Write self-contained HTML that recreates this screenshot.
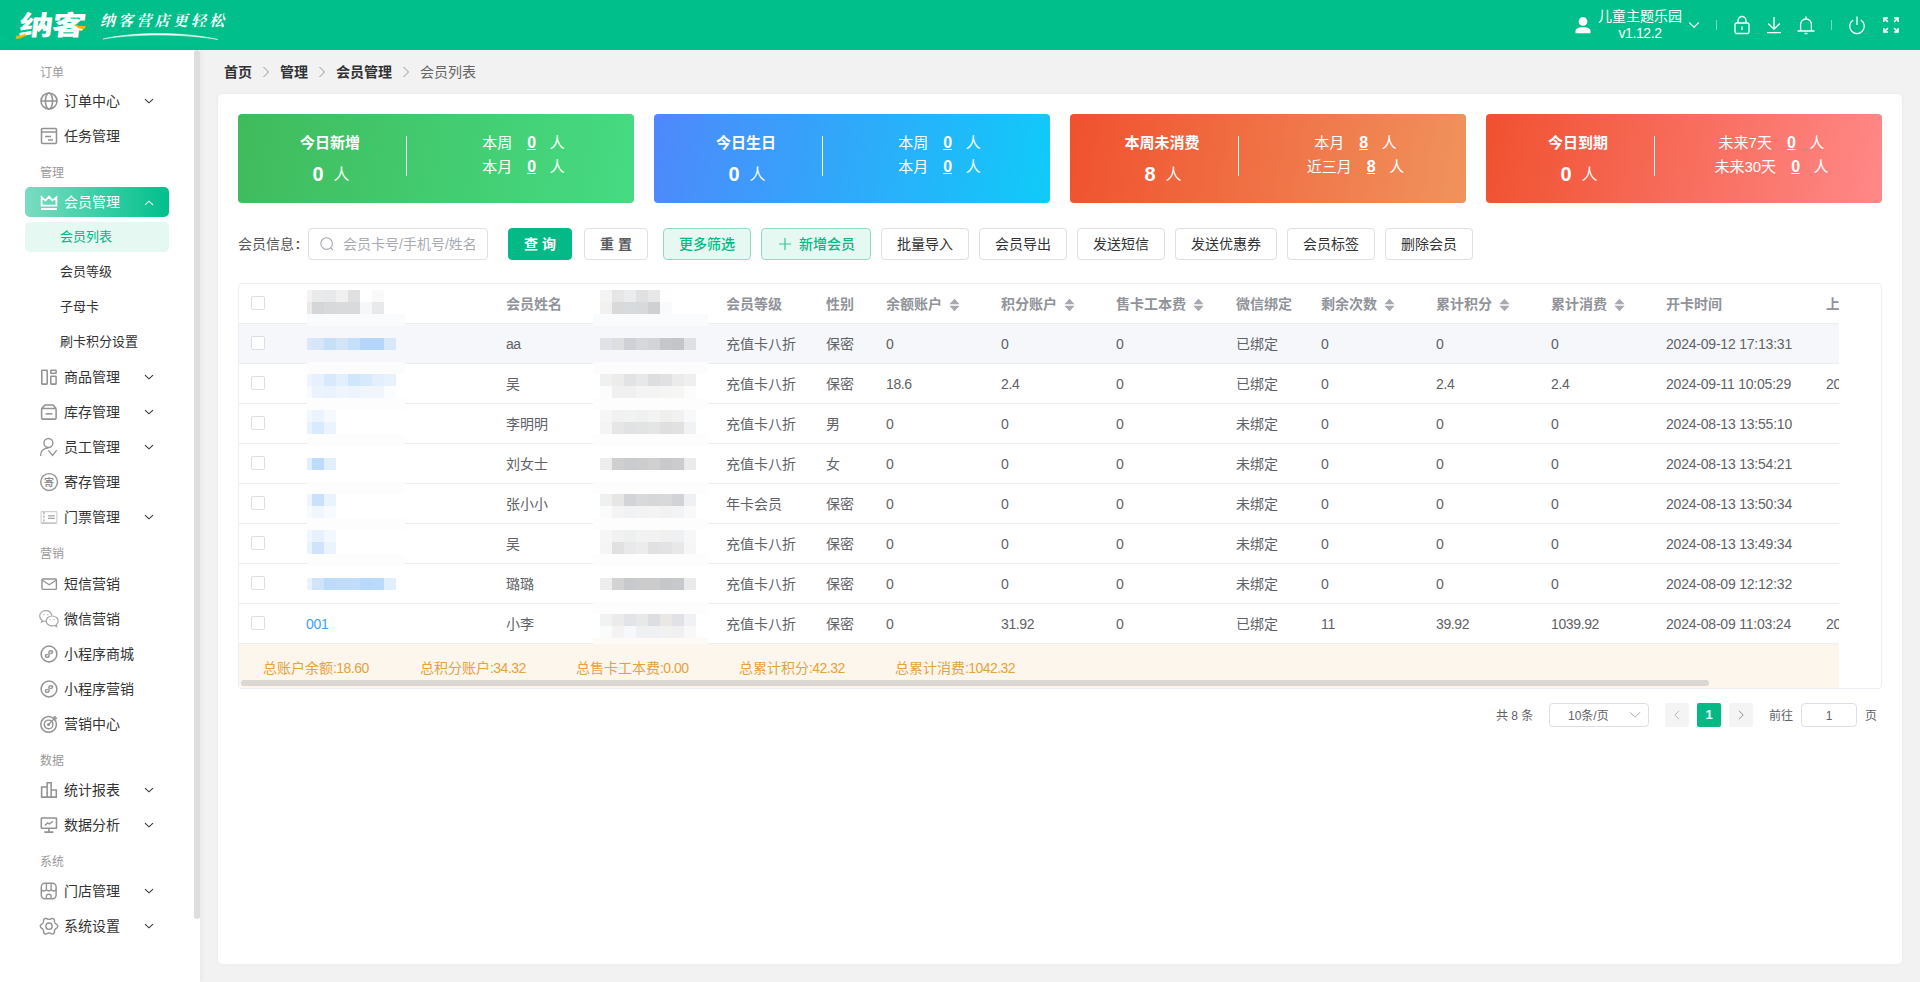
<!DOCTYPE html>
<html lang="zh-CN">
<head>
<meta charset="utf-8">
<title>会员列表</title>
<style>
*{box-sizing:border-box;margin:0;padding:0}
html,body{width:1920px;height:982px;overflow:hidden;background:#f2f2f2}
body{font-family:"Liberation Sans","Noto Sans CJK SC",sans-serif;font-size:14px;color:#333;position:relative}
.t{position:absolute;white-space:nowrap}
#hdr{position:absolute;left:0;top:0;width:1920px;height:50px;background:#00bf8a}
#side{position:absolute;left:0;top:50px;width:200px;height:932px;background:#fff;box-shadow:1px 0 5px rgba(0,0,0,.05)}
#thumb{position:absolute;left:194px;top:0;width:6px;height:869px;background:#dddee0;border-radius:3px}
.grp{position:absolute;left:40px;font-size:12px;color:#999;line-height:14px;white-space:nowrap}
.mi{position:absolute;left:64px;font-size:14px;color:#333;line-height:16px;white-space:nowrap}
.sub{position:absolute;left:60px;font-size:13px;color:#333;line-height:15px;white-space:nowrap}
.ico{position:absolute;left:39px;width:20px;height:20px;overflow:visible}
.arr{position:absolute;left:144px;width:10px;height:6px;overflow:visible}
#card{position:absolute;left:218px;top:94px;width:1684px;height:870px;background:#fff;border-radius:5px;box-shadow:0 0 4px rgba(0,0,0,.04)}
.stat{position:absolute;top:114px;width:396px;height:89px;border-radius:4px;color:#fff}
.stat .ttl{position:absolute;left:0;width:184px;text-align:center;top:19px;font-size:15px;font-weight:bold;line-height:20px}
.stat .big{position:absolute;left:0;width:184px;text-align:center;top:46px;font-size:16px;line-height:26px;white-space:nowrap;padding-left:2px}
.stat .big b{font-size:20px;margin-right:10px;position:relative;top:1px}
.stat .ln{position:absolute;left:168px;top:22px;width:1px;height:40px;background:rgba(255,255,255,.9)}
.stat .r{position:absolute;left:175px;width:221px;text-align:center;font-size:15px;line-height:20px;white-space:nowrap}
.stat .r u{font-weight:bold;font-size:16px;margin:0 14px 0 15px;letter-spacing:-.5px}
.btn{position:absolute;top:228px;height:32px;border:1px solid #dcdfe6;border-radius:4px;background:#fff;color:#333;font-size:14px;line-height:30px;text-align:center;white-space:nowrap}
.th{position:absolute;top:296px;font-size:14px;font-weight:bold;color:#909399;line-height:16px;white-space:nowrap}
.td{position:absolute;font-size:14px;color:#606266;line-height:16px;white-space:nowrap}
.row{position:absolute;left:239px;width:1600px;height:40px;border-bottom:1px solid #ebeef5}
.cb{position:absolute;left:251px;width:14px;height:14px;border:1px solid #dcdfe6;border-radius:2px;background:#fff}
.sort{position:absolute;top:298px;width:11px;height:14px}
.mz{position:absolute;height:12px}
.num{letter-spacing:-.24px}
.dec{letter-spacing:-.37px}
.dt{letter-spacing:-.21px}
.ft{letter-spacing:-.55px}
</style>
</head>
<body>
<div id="hdr"><div class="t" id="logo" style="left:17px;top:6px;font-size:27px;line-height:40px;font-weight:900;color:#fff;letter-spacing:-1px;transform-origin:0 100%;transform:skewX(-7deg) scaleX(1.26)">纳客</div><svg class="t" style="left:0;top:0" width="100" height="50" viewBox="0 0 100 50"><path d="M15.5 38.8 L16.5 35.6 C20 35.8 23 35 26 33.2 L25 36 C22 38 19 39 15.5 38.8Z" fill="#f7b500"/><path d="M73.5 24.2 C77 25 81 27.2 85.5 25.4 L84.5 28.4 C80 30 77 27.6 73.5 24.2Z" fill="#f7b500"/></svg><div class="t" id="slogan" style="left:100px;top:10px;font-size:15px;line-height:22px;font-style:italic;color:#fff;letter-spacing:3.2px;font-family:'Liberation Serif','Noto Serif CJK SC',serif;font-weight:700">纳客营店更轻松</div><svg class="t" style="left:100px;top:30px" width="125" height="12" viewBox="0 0 125 12"><path d="M3 9 C30 2.5 80 1 118 9.5 C80 3 30 4.5 3 9Z" fill="#fff" stroke="#fff" stroke-width=".5" opacity=".95"/></svg><svg class="t" style="left:1575px;top:17px" width="16" height="17" viewBox="0 0 16 17"><circle cx="8" cy="4.5" r="4.4" fill="#fff"/><path d="M0.5 16.3 V14 C0.5 11.4 3.4 10.2 8 10.2 S15.5 11.4 15.5 14 V16.3Z" fill="#fff"/></svg><div class="t" style="left:1598px;top:8px;width:84px;text-align:center;font-size:14px;line-height:17px;color:#fff">儿童主题乐园<br><span style="letter-spacing:-.4px">v1.12.2</span></div><svg class="t" style="left:1688px;top:21px" width="12" height="8" viewBox="0 0 12 8"><path d="M1.2 1.5 L6 6.2 L10.8 1.5" fill="none" stroke="#fff" stroke-width="1.2"/></svg><div class="t" style="left:1716px;top:20px;width:1px;height:10px;background:rgba(255,255,255,.45)"></div><svg class="t" style="left:1733px;top:15px" width="18" height="20" viewBox="0 0 18 20"><rect x="2" y="8" width="14" height="10.5" rx="1.5" fill="none" stroke="#fff" stroke-width="1.3"/><path d="M5 8 V5.5 A4 4 0 0 1 13 5.5 V8" fill="none" stroke="#fff" stroke-width="1.3"/><path d="M9 11.5 V15" stroke="#fff" stroke-width="1.3"/></svg><svg class="t" style="left:1765px;top:15px" width="18" height="20" viewBox="0 0 18 20"><path d="M9 2 V14 M3.2 8.5 L9 14.2 L14.8 8.5 M2 17.7 H16" fill="none" stroke="#fff" stroke-width="1.3"/></svg><svg class="t" style="left:1797px;top:15px" width="18" height="20" viewBox="0 0 18 20"><path d="M3.6 16 V9.4 A5.4 5.4 0 0 1 14.4 9.4 V16 M1 16 H17 M9 1.8 V4 M8 18.5 H10" fill="none" stroke="#fff" stroke-width="1.3" stroke-linecap="round"/></svg><div class="t" style="left:1831px;top:20px;width:1px;height:10px;background:rgba(255,255,255,.45)"></div><svg class="t" style="left:1848px;top:15px" width="18" height="20" viewBox="0 0 18 20"><path d="M5.2 5 A7.3 7.3 0 1 0 12.8 5 M9 1.5 V10" fill="none" stroke="#fff" stroke-width="1.3"/></svg><svg class="t" style="left:1882px;top:16px" width="18" height="18" viewBox="0 0 18 18"><g fill="none" stroke="#fff" stroke-width="1.5"><path d="M1.9 5.9 V1.9 H5.9 M1.9 1.9 L5.9 5.9"/><path d="M12.1 1.9 H16.1 V5.9 M16.1 1.9 L12.1 5.9"/><path d="M1.9 12.1 V16.1 H5.9 M1.9 16.1 L5.9 12.1"/><path d="M12.1 16.1 H16.1 V12.1 M16.1 16.1 L12.1 12.1"/></g></svg></div>
<div id="side"><div id="thumb"></div></div>
<div class="grp" style="top:66px">订单</div><svg class="ico" style="top:91px" viewBox="0 0 20 20" fill="none" stroke="#939393" stroke-width="1.55"><circle cx="10" cy="10" r="8"/><ellipse cx="10" cy="10" rx="3.6" ry="8"/><path d="M2 10 H18"/></svg><div class="mi" style="top:93px;color:#333">订单中心</div><svg class="arr" style="top:98px" viewBox="0 0 10 6"><path d="M1 1.2 L5 4.8 L9 1.2" fill="none" stroke="#333" stroke-width="1.1"/></svg><svg class="ico" style="top:126px" viewBox="0 0 20 20" fill="none" stroke="#939393" stroke-width="1.55"><rect x="2.5" y="2.5" width="15" height="15" rx="1.2"/><path d="M2.5 6 H17.5 M6 10.5 H12 M9 14 H14"/></svg><div class="mi" style="top:128px;color:#333">任务管理</div><div class="grp" style="top:166px">管理</div><div class="t" style="left:25px;top:187px;width:144px;height:30px;border-radius:5px;background:linear-gradient(90deg,#7bdcc2,#00c08b)"></div><svg class="ico" style="top:192px" viewBox="0 0 20 20" fill="none" stroke="#fff" stroke-width="1.8"><path d="M2.6 13.6 V5.2 L6.6 8.6 L10 4.6 L13.4 8.6 L17.4 5.2 V13.6 Z M2 17 H18"/></svg><div class="mi" style="top:194px;color:#fff">会员管理</div><svg class="arr" style="top:200px" viewBox="0 0 10 6"><path d="M1 4.8 L5 1.2 L9 4.8" fill="none" stroke="#fff" stroke-width="1.05"/></svg><div class="t" style="left:25px;top:222px;width:144px;height:30px;border-radius:5px;background:#e5f8f2"></div><div class="sub" style="top:229px;color:#00b883">会员列表</div><div class="sub" style="top:264px;color:#333">会员等级</div><div class="sub" style="top:299px;color:#333">子母卡</div><div class="sub" style="top:334px;color:#333">刷卡积分设置</div><svg class="ico" style="top:367px" viewBox="0 0 20 20" fill="none" stroke="#939393" stroke-width="1.55"><rect x="2.8" y="3.3" width="5.4" height="13.8" rx=".5"/><rect x="11.8" y="3.3" width="5.3" height="2.9" rx=".4"/><rect x="11.8" y="9.2" width="5.3" height="7.9" rx=".5"/></svg><div class="mi" style="top:369px;color:#333">商品管理</div><svg class="arr" style="top:374px" viewBox="0 0 10 6"><path d="M1 1.2 L5 4.8 L9 1.2" fill="none" stroke="#333" stroke-width="1.1"/></svg><svg class="ico" style="top:402px" viewBox="0 0 20 20" fill="none" stroke="#939393" stroke-width="1.55"><path d="M2.6 6.6 L6 3 H14 L17.1 6.6"/><rect x="2.6" y="6.5" width="14.5" height="10.6" rx="1"/><path d="M6.6 11.9 H13.4"/></svg><div class="mi" style="top:404px;color:#333">库存管理</div><svg class="arr" style="top:409px" viewBox="0 0 10 6"><path d="M1 1.2 L5 4.8 L9 1.2" fill="none" stroke="#333" stroke-width="1.1"/></svg><svg class="ico" style="top:437px" viewBox="0 0 20 20" fill="none" stroke="#939393" stroke-width="1.55"><circle cx="9.4" cy="6" r="4.5" stroke-width="1.35"/><path d="M1.5 19 C1.6 14.4 4.6 11.2 9.4 10.9 M9.4 13.3 L13.6 18.5 L17.7 13.1" stroke-width="1.35"/></svg><div class="mi" style="top:439px;color:#333">员工管理</div><svg class="arr" style="top:444px" viewBox="0 0 10 6"><path d="M1 1.2 L5 4.8 L9 1.2" fill="none" stroke="#333" stroke-width="1.1"/></svg><svg class="ico" style="top:472px" viewBox="0 0 20 20" fill="none" stroke="#939393" stroke-width="1.55"><circle cx="10.1" cy="10.05" r="8.4" stroke-width="1.4"/><text x="10.1" y="13.7" font-size="10" font-weight="bold" text-anchor="middle" fill="#8e8e8e" stroke="none" font-family="'Liberation Sans','Noto Sans CJK SC',sans-serif">寄</text></svg><div class="mi" style="top:474px;color:#333">寄存管理</div><svg class="ico" style="top:507px" viewBox="0 0 20 20" fill="none" stroke="#cfcfcf" stroke-width="1.1"><rect x="2.1" y="4.6" width="15.8" height="11.5" rx=".8"/><path d="M2.6 16.1 H17.4" stroke="#bdbdbd" stroke-width="1.2"/><path d="M4.9 5 V16" stroke="#9a9a9a" stroke-dasharray="2.2 1.4"/><path d="M9 8.8 H15.8 M9 11.4 H15.8" stroke="#a6a6a6" stroke-width="1.2"/></svg><div class="mi" style="top:509px;color:#333">门票管理</div><svg class="arr" style="top:514px" viewBox="0 0 10 6"><path d="M1 1.2 L5 4.8 L9 1.2" fill="none" stroke="#333" stroke-width="1.1"/></svg><div class="grp" style="top:547px">营销</div><svg class="ico" style="top:574px" viewBox="0 0 20 20" fill="none" stroke="#939393" stroke-width="1.55"><rect x="3" y="5" width="14.4" height="10.4" rx="1" stroke-width="1.4"/><path d="M3.4 6.2 L10.2 10.8 L17 6.2" stroke-width="1.3"/></svg><div class="mi" style="top:576px;color:#333">短信营销</div><svg class="ico" style="top:609px" viewBox="0 0 20 20" fill="none" stroke="#a4a4a4" stroke-width="1.15"><path d="M12.8 6.6 C12.2 3.6 9.8 1.6 6.8 1.6 C3.4 1.6 .7 4 .7 7 C.7 8.8 1.6 10.2 3 11.2 L2.4 13.2 L4.8 12 C5.6 12.3 6.3 12.4 7 12.4"/><path d="M13.2 7 C16.4 7 19.2 9.2 19.2 12 C19.2 13.5 18.4 14.8 17.2 15.7 L17.7 17.6 L15.6 16.5 C14.8 16.8 14 16.9 13.2 16.9 C9.9 16.9 7.2 14.8 7.2 12 C7.2 9.2 9.9 7 13.2 7Z"/><circle cx="4.8" cy="5.6" r=".7" fill="#aaa" stroke="none"/><circle cx="8.8" cy="5.6" r=".7" fill="#aaa" stroke="none"/><circle cx="11.2" cy="10.6" r=".6" fill="#aaa" stroke="none"/><circle cx="15.2" cy="10.6" r=".6" fill="#aaa" stroke="none"/></svg><div class="mi" style="top:611px;color:#333">微信营销</div><svg class="ico" style="top:644px" viewBox="0 0 20 20" fill="none" stroke="#939393" stroke-width="1.55"><circle cx="10" cy="10" r="7.9" stroke-width="1.5"/><path d="M7.8 10.6 C6.5 10.6 5.6 11.3 5.6 12.3 C5.6 13.3 6.5 14 7.7 14 C9 14 10 13.2 10 12 V8 C10 6.8 11 6 12.3 6 C13.5 6 14.4 6.7 14.4 7.7 C14.4 8.7 13.5 9.4 12.2 9.4" stroke-width="1.75" stroke-linecap="round" transform="translate(10 10) scale(.82) translate(-10 -10)"/></svg><div class="mi" style="top:646px;color:#333">小程序商城</div><svg class="ico" style="top:679px" viewBox="0 0 20 20" fill="none" stroke="#939393" stroke-width="1.55"><circle cx="10" cy="10" r="7.9" stroke-width="1.5"/><path d="M7.8 10.6 C6.5 10.6 5.6 11.3 5.6 12.3 C5.6 13.3 6.5 14 7.7 14 C9 14 10 13.2 10 12 V8 C10 6.8 11 6 12.3 6 C13.5 6 14.4 6.7 14.4 7.7 C14.4 8.7 13.5 9.4 12.2 9.4" stroke-width="1.75" stroke-linecap="round" transform="translate(10 10) scale(.82) translate(-10 -10)"/></svg><div class="mi" style="top:681px;color:#333">小程序营销</div><svg class="ico" style="top:714px" viewBox="0 0 20 20" fill="none" stroke="#939393" stroke-width="1.55"><circle cx="9.6" cy="10.4" r="7.8" stroke-width="1.5"/><circle cx="9.6" cy="10.4" r="4.3" stroke-width="1.4"/><circle cx="9.6" cy="10.4" r="1.5" fill="#939393" stroke="none"/><path d="M9.6 10.4 L16.2 3.8" stroke-width="1.3"/><path d="M14.4 2.8 L14.9 5.1 L17.2 5.6 L18.6 3.4 L16.6 3.4 L16.6 1.4Z" fill="#939393" stroke="none"/></svg><div class="mi" style="top:716px;color:#333">营销中心</div><div class="grp" style="top:754px">数据</div><svg class="ico" style="top:780px" viewBox="0 0 20 20" fill="none" stroke="#939393" stroke-width="1.55"><path d="M2.6 17.1 V7 H8.15 M8.15 17.1 V2.8 H12.15 V17.1 M12.15 10 H17.3 V17.1 M1.9 17.1 H18"/></svg><div class="mi" style="top:782px;color:#333">统计报表</div><svg class="arr" style="top:787px" viewBox="0 0 10 6"><path d="M1 1.2 L5 4.8 L9 1.2" fill="none" stroke="#333" stroke-width="1.1"/></svg><svg class="ico" style="top:815px" viewBox="0 0 20 20" fill="none" stroke="#939393" stroke-width="1.55"><rect x="2.3" y="3" width="15.2" height="10.3" rx=".6"/><path d="M9.9 13.3 V17 M5.4 17.1 H14.4"/><path d="M5.8 10.5 L8.7 7.9 L10.3 9 L13.9 6.4" stroke-width="1.3"/></svg><div class="mi" style="top:817px;color:#333">数据分析</div><svg class="arr" style="top:822px" viewBox="0 0 10 6"><path d="M1 1.2 L5 4.8 L9 1.2" fill="none" stroke="#333" stroke-width="1.1"/></svg><div class="grp" style="top:855px">系统</div><svg class="ico" style="top:881px" viewBox="0 0 20 20" fill="none" stroke="#939393" stroke-width="1.55"><rect x="2.3" y="2.3" width="14.8" height="15.4" rx="3.6" stroke-width="1.45"/><path d="M7.4 2.3 V8.4 M12.1 2.3 V8.4 M2.3 8 C2.6 10.6 7 10.6 7.4 8.2 C7.8 10.6 11.7 10.6 12.1 8.2 C12.5 10.6 16.8 10.6 17.1 8 M7.4 17.7 V15.3 C7.4 12.6 12.1 12.6 12.1 15.3 V17.7" stroke-width="1.35"/></svg><div class="mi" style="top:883px;color:#333">门店管理</div><svg class="arr" style="top:888px" viewBox="0 0 10 6"><path d="M1 1.2 L5 4.8 L9 1.2" fill="none" stroke="#333" stroke-width="1.1"/></svg><svg class="ico" style="top:916px" viewBox="0 0 20 20" fill="none" stroke="#939393" stroke-width="1.55"><path d="M18.70 10.20 L18.61 10.76 L18.35 11.30 L17.96 11.78 L17.49 12.21 L16.88 12.54 L16.47 12.88 L16.14 13.23 L15.89 13.60 L15.70 14.01 L15.56 14.46 L15.46 14.99 L15.48 15.68 L15.35 16.30 L15.13 16.88 L14.79 17.37 L14.35 17.73 L13.82 17.94 L13.22 17.98 L12.61 17.88 L12.01 17.69 L11.42 17.33 L10.91 17.14 L10.45 17.04 L10.00 17.00 L9.55 17.04 L9.09 17.14 L8.58 17.33 L7.99 17.69 L7.39 17.88 L6.78 17.98 L6.18 17.94 L5.65 17.73 L5.21 17.37 L4.87 16.88 L4.65 16.30 L4.52 15.68 L4.54 14.99 L4.44 14.46 L4.30 14.01 L4.11 13.60 L3.86 13.23 L3.53 12.88 L3.12 12.54 L2.51 12.21 L2.04 11.78 L1.65 11.30 L1.39 10.76 L1.30 10.20 L1.39 9.64 L1.65 9.10 L2.04 8.62 L2.51 8.19 L3.12 7.86 L3.53 7.52 L3.86 7.17 L4.11 6.80 L4.30 6.39 L4.44 5.94 L4.54 5.41 L4.52 4.72 L4.65 4.10 L4.87 3.52 L5.21 3.03 L5.65 2.67 L6.18 2.46 L6.78 2.42 L7.39 2.52 L7.99 2.71 L8.58 3.07 L9.09 3.26 L9.55 3.36 L10.00 3.40 L10.45 3.36 L10.91 3.26 L11.42 3.07 L12.01 2.71 L12.61 2.52 L13.22 2.42 L13.82 2.46 L14.35 2.67 L14.79 3.03 L15.13 3.52 L15.35 4.10 L15.48 4.72 L15.46 5.41 L15.56 5.94 L15.70 6.39 L15.89 6.80 L16.14 7.17 L16.47 7.52 L16.88 7.86 L17.49 8.19 L17.96 8.62 L18.35 9.10 L18.61 9.64Z" stroke-linejoin="round" stroke-width="1.4"/><circle cx="10" cy="10.2" r="3.15" stroke-width="1.4"/></svg><div class="mi" style="top:918px;color:#333">系统设置</div><svg class="arr" style="top:923px" viewBox="0 0 10 6"><path d="M1 1.2 L5 4.8 L9 1.2" fill="none" stroke="#333" stroke-width="1.1"/></svg>
<div class="t" style="left:224px;top:63px;font-size:14px;line-height:18px;font-weight:bold;color:#303133">首页</div><div class="t" style="left:280px;top:63px;font-size:14px;line-height:18px;font-weight:bold;color:#303133">管理</div><div class="t" style="left:336px;top:63px;font-size:14px;line-height:18px;font-weight:bold;color:#303133">会员管理</div><div class="t" style="left:420px;top:63px;font-size:14px;line-height:18px;color:#666">会员列表</div><svg class="t" style="left:262px;top:66px" width="8" height="12" viewBox="0 0 8 12"><path d="M1.5 1 L6.5 6 L1.5 11" fill="none" stroke="#909399" stroke-width="1"/></svg><svg class="t" style="left:318px;top:66px" width="8" height="12" viewBox="0 0 8 12"><path d="M1.5 1 L6.5 6 L1.5 11" fill="none" stroke="#909399" stroke-width="1"/></svg><svg class="t" style="left:402px;top:66px" width="8" height="12" viewBox="0 0 8 12"><path d="M1.5 1 L6.5 6 L1.5 11" fill="none" stroke="#909399" stroke-width="1"/></svg>
<div id="card"></div>
<div class="stat" style="left:238px;background:linear-gradient(100deg,#40bb5c,#46db83)"><div class="ttl">今日新增</div><div class="big"><b>0</b>人</div><div class="ln"></div><div class="r" style="top:19px">本周<u>0</u>人</div><div class="r" style="top:43px">本月<u>0</u>人</div></div><div class="stat" style="left:654px;background:linear-gradient(100deg,#4f88fb,#0fcbf9)"><div class="ttl">今日生日</div><div class="big"><b>0</b>人</div><div class="ln"></div><div class="r" style="top:19px">本周<u>0</u>人</div><div class="r" style="top:43px">本月<u>0</u>人</div></div><div class="stat" style="left:1070px;background:linear-gradient(100deg,#f0512f,#f0935c)"><div class="ttl">本周未消费</div><div class="big"><b>8</b>人</div><div class="ln"></div><div class="r" style="top:19px">本月<u>8</u>人</div><div class="r" style="top:43px">近三月<u>8</u>人</div></div><div class="stat" style="left:1486px;background:linear-gradient(100deg,#f0512f,#ff8888)"><div class="ttl">今日到期</div><div class="big"><b>0</b>人</div><div class="ln"></div><div class="r" style="top:19px">未来7天<u>0</u>人</div><div class="r" style="top:43px">未来30天<u>0</u>人</div></div>
<div class="t" style="left:238px;top:235px;font-size:14px;line-height:18px;color:#555">会员信息<span style="margin-left:1.5px;font-weight:bold">:</span></div><div class="btn" style="left:308px;width:180px;text-align:left;padding-left:34px;color:#a8abb2">会员卡号/手机号/姓名</div><svg class="t" style="left:319px;top:236px" width="16" height="16" viewBox="0 0 16 16"><circle cx="7.6" cy="7.6" r="5.8" fill="none" stroke="#a8abb2" stroke-width="1.1"/><path d="M11.8 11.8 L14 14" stroke="#a8abb2" stroke-width="1.1"/></svg><div class="btn" style="left:508px;width:64px;background:#03ba86;border-color:#03ba86;color:#fff;font-weight:bold">查 询</div><div class="btn" style="left:584px;width:64px;font-weight:bold;color:#5a5c61">重 置</div><div class="btn" style="left:663px;width:88px;background:#e6f8f2;border-color:#8edcc4;color:#05b985;font-weight:500">更多筛选</div><div class="btn" style="left:761px;width:110px;background:#e6f8f2;border-color:#8edcc4;color:#05b985;font-weight:500;padding-left:22px">新增会员</div><svg class="t" style="left:778px;top:237px" width="14" height="14" viewBox="0 0 14 14"><path d="M7 1 V13 M1 7 H13" stroke="#35c79c" stroke-width="1.2"/></svg><div class="btn" style="left:881px;width:88px">批量导入</div><div class="btn" style="left:979px;width:88px">会员导出</div><div class="btn" style="left:1077px;width:88px">发送短信</div><div class="btn" style="left:1175px;width:102px">发送优惠券</div><div class="btn" style="left:1287px;width:88px">会员标签</div><div class="btn" style="left:1385px;width:88px">删除会员</div>
<div class="t" style="left:238px;top:283px;width:1644px;height:406px;border:1px solid #ebeef5;border-radius:4px"></div><div class="row" style="top:284px"></div><div class="row" style="top:324px;background:#f5f7fa"></div><div class="row" style="top:364px"></div><div class="row" style="top:404px"></div><div class="row" style="top:444px"></div><div class="row" style="top:484px"></div><div class="row" style="top:524px"></div><div class="row" style="top:564px"></div><div class="row" style="top:604px"></div><div class="t" style="left:239px;top:644px;width:1600px;height:44px;background:#fdf6ec"></div><div class="cb" style="top:296px"></div><div class="th" style="left:506px">会员姓名</div><div class="th" style="left:726px">会员等级</div><div class="th" style="left:826px">性别</div><div class="th" style="left:886px">余额账户</div><svg class="sort" style="left:949px" viewBox="0 0 11 14"><path d="M5.5 0.8 L10.6 6.2 H0.4Z M5.5 13.2 L10.6 7.8 H0.4Z" fill="#a6a9b0"/></svg><div class="th" style="left:1001px">积分账户</div><svg class="sort" style="left:1064px" viewBox="0 0 11 14"><path d="M5.5 0.8 L10.6 6.2 H0.4Z M5.5 13.2 L10.6 7.8 H0.4Z" fill="#a6a9b0"/></svg><div class="th" style="left:1116px">售卡工本费</div><svg class="sort" style="left:1193px" viewBox="0 0 11 14"><path d="M5.5 0.8 L10.6 6.2 H0.4Z M5.5 13.2 L10.6 7.8 H0.4Z" fill="#a6a9b0"/></svg><div class="th" style="left:1236px">微信绑定</div><div class="th" style="left:1321px">剩余次数</div><svg class="sort" style="left:1384px" viewBox="0 0 11 14"><path d="M5.5 0.8 L10.6 6.2 H0.4Z M5.5 13.2 L10.6 7.8 H0.4Z" fill="#a6a9b0"/></svg><div class="th" style="left:1436px">累计积分</div><svg class="sort" style="left:1499px" viewBox="0 0 11 14"><path d="M5.5 0.8 L10.6 6.2 H0.4Z M5.5 13.2 L10.6 7.8 H0.4Z" fill="#a6a9b0"/></svg><div class="th" style="left:1551px">累计消费</div><svg class="sort" style="left:1614px" viewBox="0 0 11 14"><path d="M5.5 0.8 L10.6 6.2 H0.4Z M5.5 13.2 L10.6 7.8 H0.4Z" fill="#a6a9b0"/></svg><div class="th" style="left:1666px">开卡时间</div><div class="th" style="left:1826px;width:13px;overflow:hidden">上次</div><div class="cb" style="top:336px"></div><div class="td" style="left:506px;top:336px;letter-spacing:-.5px">aa</div><div class="td" style="left:726px;top:336px">充值卡八折</div><div class="td" style="left:826px;top:336px">保密</div><div class="td num" style="left:886px;top:336px">0</div><div class="td num" style="left:1001px;top:336px">0</div><div class="td num" style="left:1116px;top:336px">0</div><div class="td" style="left:1236px;top:336px">已绑定</div><div class="td num" style="left:1321px;top:336px">0</div><div class="td num" style="left:1436px;top:336px">0</div><div class="td num" style="left:1551px;top:336px">0</div><div class="td dt" style="left:1666px;top:336px">2024-09-12 17:13:31</div><div class="cb" style="top:376px"></div><div class="td" style="left:506px;top:376px">吴</div><div class="td" style="left:726px;top:376px">充值卡八折</div><div class="td" style="left:826px;top:376px">保密</div><div class="td dec" style="left:886px;top:376px">18.6</div><div class="td dec" style="left:1001px;top:376px">2.4</div><div class="td num" style="left:1116px;top:376px">0</div><div class="td" style="left:1236px;top:376px">已绑定</div><div class="td num" style="left:1321px;top:376px">0</div><div class="td dec" style="left:1436px;top:376px">2.4</div><div class="td dec" style="left:1551px;top:376px">2.4</div><div class="td dt" style="left:1666px;top:376px">2024-09-11 10:05:29</div><div class="td num" style="left:1826px;top:376px;width:13px;overflow:hidden">2024</div><div class="cb" style="top:416px"></div><div class="td" style="left:506px;top:416px">李明明</div><div class="td" style="left:726px;top:416px">充值卡八折</div><div class="td" style="left:826px;top:416px">男</div><div class="td num" style="left:886px;top:416px">0</div><div class="td num" style="left:1001px;top:416px">0</div><div class="td num" style="left:1116px;top:416px">0</div><div class="td" style="left:1236px;top:416px">未绑定</div><div class="td num" style="left:1321px;top:416px">0</div><div class="td num" style="left:1436px;top:416px">0</div><div class="td num" style="left:1551px;top:416px">0</div><div class="td dt" style="left:1666px;top:416px">2024-08-13 13:55:10</div><div class="cb" style="top:456px"></div><div class="td" style="left:506px;top:456px">刘女士</div><div class="td" style="left:726px;top:456px">充值卡八折</div><div class="td" style="left:826px;top:456px">女</div><div class="td num" style="left:886px;top:456px">0</div><div class="td num" style="left:1001px;top:456px">0</div><div class="td num" style="left:1116px;top:456px">0</div><div class="td" style="left:1236px;top:456px">未绑定</div><div class="td num" style="left:1321px;top:456px">0</div><div class="td num" style="left:1436px;top:456px">0</div><div class="td num" style="left:1551px;top:456px">0</div><div class="td dt" style="left:1666px;top:456px">2024-08-13 13:54:21</div><div class="cb" style="top:496px"></div><div class="td" style="left:506px;top:496px">张小小</div><div class="td" style="left:726px;top:496px">年卡会员</div><div class="td" style="left:826px;top:496px">保密</div><div class="td num" style="left:886px;top:496px">0</div><div class="td num" style="left:1001px;top:496px">0</div><div class="td num" style="left:1116px;top:496px">0</div><div class="td" style="left:1236px;top:496px">未绑定</div><div class="td num" style="left:1321px;top:496px">0</div><div class="td num" style="left:1436px;top:496px">0</div><div class="td num" style="left:1551px;top:496px">0</div><div class="td dt" style="left:1666px;top:496px">2024-08-13 13:50:34</div><div class="cb" style="top:536px"></div><div class="td" style="left:506px;top:536px">吴</div><div class="td" style="left:726px;top:536px">充值卡八折</div><div class="td" style="left:826px;top:536px">保密</div><div class="td num" style="left:886px;top:536px">0</div><div class="td num" style="left:1001px;top:536px">0</div><div class="td num" style="left:1116px;top:536px">0</div><div class="td" style="left:1236px;top:536px">未绑定</div><div class="td num" style="left:1321px;top:536px">0</div><div class="td num" style="left:1436px;top:536px">0</div><div class="td num" style="left:1551px;top:536px">0</div><div class="td dt" style="left:1666px;top:536px">2024-08-13 13:49:34</div><div class="cb" style="top:576px"></div><div class="td" style="left:506px;top:576px">璐璐</div><div class="td" style="left:726px;top:576px">充值卡八折</div><div class="td" style="left:826px;top:576px">保密</div><div class="td num" style="left:886px;top:576px">0</div><div class="td num" style="left:1001px;top:576px">0</div><div class="td num" style="left:1116px;top:576px">0</div><div class="td" style="left:1236px;top:576px">未绑定</div><div class="td num" style="left:1321px;top:576px">0</div><div class="td num" style="left:1436px;top:576px">0</div><div class="td num" style="left:1551px;top:576px">0</div><div class="td dt" style="left:1666px;top:576px">2024-08-09 12:12:32</div><div class="cb" style="top:616px"></div><div class="td" style="left:506px;top:616px">小李</div><div class="td" style="left:726px;top:616px">充值卡八折</div><div class="td" style="left:826px;top:616px">保密</div><div class="td num" style="left:886px;top:616px">0</div><div class="td dec" style="left:1001px;top:616px">31.92</div><div class="td num" style="left:1116px;top:616px">0</div><div class="td" style="left:1236px;top:616px">已绑定</div><div class="td num" style="left:1321px;top:616px">11</div><div class="td dec" style="left:1436px;top:616px">39.92</div><div class="td dec" style="left:1551px;top:616px">1039.92</div><div class="td dt" style="left:1666px;top:616px">2024-08-09 11:03:24</div><div class="td num" style="left:1826px;top:616px;width:13px;overflow:hidden">2024</div><div class="td num" style="left:306px;top:616px;color:#409eff">001</div><div class="td" style="left:263px;top:660px;color:#e6a23c">总账户余额<span class="ft">:18.60</span></div><div class="td" style="left:420px;top:660px;color:#e6a23c">总积分账户<span class="ft">:34.32</span></div><div class="td" style="left:576px;top:660px;color:#e6a23c">总售卡工本费<span class="ft">:0.00</span></div><div class="td" style="left:739px;top:660px;color:#e6a23c">总累计积分<span class="ft">:42.32</span></div><div class="td" style="left:895px;top:660px;color:#e6a23c">总累计消费<span class="ft">:1042.32</span></div><div class="t" style="left:241px;top:680px;width:1468px;height:6px;border-radius:3px;background:rgba(144,147,153,.3)"></div>
<div class="mz" style="left:307px;top:290px;width:98px;height:24px;background:#fff"></div><div class="mz" style="left:307px;top:314px;width:98px;height:12px;background:#fafbfd"></div><div class="mz" style="left:307px;top:362px;width:98px;height:12px;background:#fcfcfd"></div><div class="mz" style="left:307px;top:398px;width:98px;height:12px;background:#fdfdfd"></div><div class="mz" style="left:307px;top:434px;width:98px;height:12px;background:#fdfdfd"></div><div class="mz" style="left:307px;top:482px;width:98px;height:12px;background:#fdfdfd"></div><div class="mz" style="left:307px;top:518px;width:98px;height:12px;background:#fdfdfd"></div><div class="mz" style="left:307px;top:554px;width:98px;height:12px;background:#fdfdfd"></div><div class="mz" style="left:593px;top:290px;width:115px;height:24px;background:#fff"></div><div class="mz" style="left:593px;top:314px;width:115px;height:12px;background:#fafbfd"></div><div class="mz" style="left:593px;top:362px;width:115px;height:12px;background:#fcfcfd"></div><div class="mz" style="left:593px;top:398px;width:115px;height:12px;background:#fdfdfd"></div><div class="mz" style="left:593px;top:434px;width:115px;height:12px;background:#fdfdfd"></div><div class="mz" style="left:593px;top:482px;width:115px;height:12px;background:#fdfdfd"></div><div class="mz" style="left:593px;top:518px;width:115px;height:12px;background:#fdfdfd"></div><div class="mz" style="left:593px;top:554px;width:115px;height:12px;background:#fdfdfd"></div><div class="mz" style="left:593px;top:602px;width:115px;height:12px;background:#fdfdfd"></div><div class="mz" style="left:593px;top:638px;width:115px;height:6px;background:#fefaf6"></div><div class="mz" style="left:593px;top:644px;width:115px;height:6px;background:#fdf6ee"></div><div class="mz" style="left:307px;top:290px;width:5px;background:#f3f3f2"></div><div class="mz" style="left:312px;top:290px;width:12px;background:#e9eaea"></div><div class="mz" style="left:324px;top:290px;width:12px;background:#e8e9ea"></div><div class="mz" style="left:336px;top:290px;width:12px;background:#f0f0f0"></div><div class="mz" style="left:348px;top:290px;width:12px;background:#dfe0e2"></div><div class="mz" style="left:360px;top:290px;width:12px;background:#ffffff"></div><div class="mz" style="left:372px;top:290px;width:12px;background:#f8f9f8"></div><div class="mz" style="left:307px;top:302px;width:5px;background:#ebeae8"></div><div class="mz" style="left:312px;top:302px;width:12px;background:#d5d6d8"></div><div class="mz" style="left:324px;top:302px;width:12px;background:#d8d9db"></div><div class="mz" style="left:336px;top:302px;width:12px;background:#d9dadc"></div><div class="mz" style="left:348px;top:302px;width:12px;background:#d9dadc"></div><div class="mz" style="left:360px;top:302px;width:12px;background:#f7f7f7"></div><div class="mz" style="left:372px;top:302px;width:12px;background:#e8e9eb"></div><div class="mz" style="left:307px;top:338px;width:5px;background:#dce8f8"></div><div class="mz" style="left:312px;top:338px;width:12px;background:#d6e6f8"></div><div class="mz" style="left:324px;top:338px;width:12px;background:#c6dff8"></div><div class="mz" style="left:336px;top:338px;width:12px;background:#d2e4f8"></div><div class="mz" style="left:348px;top:338px;width:12px;background:#c4dff8"></div><div class="mz" style="left:360px;top:338px;width:12px;background:#b5d6f8"></div><div class="mz" style="left:372px;top:338px;width:12px;background:#b5d5f9"></div><div class="mz" style="left:384px;top:338px;width:12px;background:#d8e8f9"></div><div class="mz" style="left:307px;top:374px;width:5px;background:#edf4fd"></div><div class="mz" style="left:312px;top:374px;width:12px;background:#e6f1fd"></div><div class="mz" style="left:324px;top:374px;width:12px;background:#d8e9fc"></div><div class="mz" style="left:336px;top:374px;width:12px;background:#e2effd"></div><div class="mz" style="left:348px;top:374px;width:12px;background:#d0e6fc"></div><div class="mz" style="left:360px;top:374px;width:12px;background:#d8e9fc"></div><div class="mz" style="left:372px;top:374px;width:12px;background:#e3effd"></div><div class="mz" style="left:384px;top:374px;width:12px;background:#e8f2fd"></div><div class="mz" style="left:307px;top:386px;width:5px;background:#f7fafe"></div><div class="mz" style="left:312px;top:386px;width:12px;background:#ebf3fd"></div><div class="mz" style="left:324px;top:386px;width:12px;background:#eaf2fd"></div><div class="mz" style="left:336px;top:386px;width:12px;background:#eff5fd"></div><div class="mz" style="left:348px;top:386px;width:12px;background:#eef4fd"></div><div class="mz" style="left:360px;top:386px;width:12px;background:#f1f6fd"></div><div class="mz" style="left:372px;top:386px;width:12px;background:#f1f6fd"></div><div class="mz" style="left:384px;top:386px;width:12px;background:#fbfcfe"></div><div class="mz" style="left:307px;top:410px;width:5px;background:#f3f8fe"></div><div class="mz" style="left:312px;top:410px;width:12px;background:#ebf4fe"></div><div class="mz" style="left:324px;top:410px;width:12px;background:#f6fafe"></div><div class="mz" style="left:307px;top:422px;width:5px;background:#e8f2fd"></div><div class="mz" style="left:312px;top:422px;width:12px;background:#d8eafd"></div><div class="mz" style="left:324px;top:422px;width:12px;background:#ebf4fe"></div><div class="mz" style="left:307px;top:458px;width:5px;background:#e3eefc"></div><div class="mz" style="left:312px;top:458px;width:12px;background:#bddcfb"></div><div class="mz" style="left:324px;top:458px;width:12px;background:#e2effd"></div><div class="mz" style="left:307px;top:494px;width:5px;background:#eef5fe"></div><div class="mz" style="left:312px;top:494px;width:12px;background:#c9e1fc"></div><div class="mz" style="left:324px;top:494px;width:12px;background:#e9f3fe"></div><div class="mz" style="left:307px;top:506px;width:5px;background:#f8fbfe"></div><div class="mz" style="left:312px;top:506px;width:12px;background:#eff6fe"></div><div class="mz" style="left:324px;top:506px;width:12px;background:#f7fafe"></div><div class="mz" style="left:307px;top:530px;width:5px;background:#f1f7fe"></div><div class="mz" style="left:312px;top:530px;width:12px;background:#e6f1fd"></div><div class="mz" style="left:324px;top:530px;width:12px;background:#f3f8fe"></div><div class="mz" style="left:307px;top:542px;width:5px;background:#e9f2fd"></div><div class="mz" style="left:312px;top:542px;width:12px;background:#cfe4fc"></div><div class="mz" style="left:324px;top:542px;width:12px;background:#ebf4fe"></div><div class="mz" style="left:307px;top:578px;width:5px;background:#e9f2fd"></div><div class="mz" style="left:312px;top:578px;width:12px;background:#cfe3fb"></div><div class="mz" style="left:324px;top:578px;width:12px;background:#bddafa"></div><div class="mz" style="left:336px;top:578px;width:12px;background:#c0dcfa"></div><div class="mz" style="left:348px;top:578px;width:12px;background:#c0dcfa"></div><div class="mz" style="left:360px;top:578px;width:12px;background:#b9d9fa"></div><div class="mz" style="left:372px;top:578px;width:12px;background:#bbdafa"></div><div class="mz" style="left:384px;top:578px;width:12px;background:#e0eefd"></div><div class="mz" style="left:600px;top:290px;width:12px;background:#f4f4f2"></div><div class="mz" style="left:612px;top:290px;width:12px;background:#e6e6e6"></div><div class="mz" style="left:624px;top:290px;width:12px;background:#ebecee"></div><div class="mz" style="left:636px;top:290px;width:12px;background:#e0e1e3"></div><div class="mz" style="left:648px;top:290px;width:12px;background:#e8e8e8"></div><div class="mz" style="left:660px;top:290px;width:12px;background:#fefefe"></div><div class="mz" style="left:600px;top:302px;width:12px;background:#f2f1ef"></div><div class="mz" style="left:612px;top:302px;width:12px;background:#d9d9da"></div><div class="mz" style="left:624px;top:302px;width:12px;background:#d8dbde"></div><div class="mz" style="left:636px;top:302px;width:12px;background:#d8d9db"></div><div class="mz" style="left:648px;top:302px;width:12px;background:#d0d0d1"></div><div class="mz" style="left:660px;top:302px;width:12px;background:#f8fafb"></div><div class="mz" style="left:600px;top:338px;width:12px;background:#dfe2e7"></div><div class="mz" style="left:612px;top:338px;width:12px;background:#dddee0"></div><div class="mz" style="left:624px;top:338px;width:12px;background:#cfd1d6"></div><div class="mz" style="left:636px;top:338px;width:12px;background:#d6d8dc"></div><div class="mz" style="left:648px;top:338px;width:12px;background:#d1d4d9"></div><div class="mz" style="left:660px;top:338px;width:12px;background:#c6c7cb"></div><div class="mz" style="left:672px;top:338px;width:12px;background:#c4c5c9"></div><div class="mz" style="left:684px;top:338px;width:12px;background:#dee0e6"></div><div class="mz" style="left:600px;top:374px;width:12px;background:#eff0f0"></div><div class="mz" style="left:612px;top:374px;width:12px;background:#ececea"></div><div class="mz" style="left:624px;top:374px;width:12px;background:#e2e3e5"></div><div class="mz" style="left:636px;top:374px;width:12px;background:#e8e8e8"></div><div class="mz" style="left:648px;top:374px;width:12px;background:#dddee0"></div><div class="mz" style="left:660px;top:374px;width:12px;background:#e1e1e3"></div><div class="mz" style="left:672px;top:374px;width:12px;background:#ebebeb"></div><div class="mz" style="left:684px;top:374px;width:12px;background:#efeff0"></div><div class="mz" style="left:600px;top:386px;width:12px;background:#fbfcfc"></div><div class="mz" style="left:612px;top:386px;width:12px;background:#f0f0f0"></div><div class="mz" style="left:624px;top:386px;width:12px;background:#f0f0f0"></div><div class="mz" style="left:636px;top:386px;width:12px;background:#f4f4f2"></div><div class="mz" style="left:648px;top:386px;width:12px;background:#f3f4f3"></div><div class="mz" style="left:660px;top:386px;width:12px;background:#f5f5f4"></div><div class="mz" style="left:672px;top:386px;width:12px;background:#f6f6f5"></div><div class="mz" style="left:684px;top:386px;width:12px;background:#fcfcfc"></div><div class="mz" style="left:600px;top:410px;width:12px;background:#f6f6f6"></div><div class="mz" style="left:612px;top:410px;width:12px;background:#f1f1f1"></div><div class="mz" style="left:624px;top:410px;width:12px;background:#f1f2f2"></div><div class="mz" style="left:636px;top:410px;width:12px;background:#f0f0f0"></div><div class="mz" style="left:648px;top:410px;width:12px;background:#f2f3f3"></div><div class="mz" style="left:660px;top:410px;width:12px;background:#efefed"></div><div class="mz" style="left:672px;top:410px;width:12px;background:#f1f1f0"></div><div class="mz" style="left:684px;top:410px;width:12px;background:#f8f9fb"></div><div class="mz" style="left:600px;top:422px;width:12px;background:#f4f4f4"></div><div class="mz" style="left:612px;top:422px;width:12px;background:#e6e6e6"></div><div class="mz" style="left:624px;top:422px;width:12px;background:#e1e2e4"></div><div class="mz" style="left:636px;top:422px;width:12px;background:#e3e3e4"></div><div class="mz" style="left:648px;top:422px;width:12px;background:#e4e5e5"></div><div class="mz" style="left:660px;top:422px;width:12px;background:#dfdfdf"></div><div class="mz" style="left:672px;top:422px;width:12px;background:#e1e1e2"></div><div class="mz" style="left:684px;top:422px;width:12px;background:#f1f2f4"></div><div class="mz" style="left:600px;top:458px;width:12px;background:#eceded"></div><div class="mz" style="left:612px;top:458px;width:12px;background:#cfcfd0"></div><div class="mz" style="left:624px;top:458px;width:12px;background:#cbccd0"></div><div class="mz" style="left:636px;top:458px;width:12px;background:#cdcdcf"></div><div class="mz" style="left:648px;top:458px;width:12px;background:#d0d0d1"></div><div class="mz" style="left:660px;top:458px;width:12px;background:#c9c9cb"></div><div class="mz" style="left:672px;top:458px;width:12px;background:#cbcbcd"></div><div class="mz" style="left:684px;top:458px;width:12px;background:#ebebec"></div><div class="mz" style="left:600px;top:494px;width:12px;background:#eff0f0"></div><div class="mz" style="left:612px;top:494px;width:12px;background:#e6e6e5"></div><div class="mz" style="left:624px;top:494px;width:12px;background:#d2d4d8"></div><div class="mz" style="left:636px;top:494px;width:12px;background:#d8d9db"></div><div class="mz" style="left:648px;top:494px;width:12px;background:#d6d7d9"></div><div class="mz" style="left:660px;top:494px;width:12px;background:#d8d9da"></div><div class="mz" style="left:672px;top:494px;width:12px;background:#d2d3d6"></div><div class="mz" style="left:684px;top:494px;width:12px;background:#eff0f3"></div><div class="mz" style="left:600px;top:506px;width:12px;background:#fafcfc"></div><div class="mz" style="left:612px;top:506px;width:12px;background:#f4f4f4"></div><div class="mz" style="left:624px;top:506px;width:12px;background:#f1f2f4"></div><div class="mz" style="left:636px;top:506px;width:12px;background:#f3f3f4"></div><div class="mz" style="left:648px;top:506px;width:12px;background:#f4f4f4"></div><div class="mz" style="left:660px;top:506px;width:12px;background:#f2f2f2"></div><div class="mz" style="left:672px;top:506px;width:12px;background:#f3f4f6"></div><div class="mz" style="left:684px;top:506px;width:12px;background:#f9f9f9"></div><div class="mz" style="left:600px;top:530px;width:12px;background:#f6f6f6"></div><div class="mz" style="left:612px;top:530px;width:12px;background:#f1f1f1"></div><div class="mz" style="left:624px;top:530px;width:12px;background:#eef0f0"></div><div class="mz" style="left:636px;top:530px;width:12px;background:#f2f2f2"></div><div class="mz" style="left:648px;top:530px;width:12px;background:#f1f2f2"></div><div class="mz" style="left:660px;top:530px;width:12px;background:#f0f0ee"></div><div class="mz" style="left:672px;top:530px;width:12px;background:#eff0f1"></div><div class="mz" style="left:684px;top:530px;width:12px;background:#f6f7f9"></div><div class="mz" style="left:600px;top:542px;width:12px;background:#f5f5f5"></div><div class="mz" style="left:612px;top:542px;width:12px;background:#e1e1e1"></div><div class="mz" style="left:624px;top:542px;width:12px;background:#e9e9eb"></div><div class="mz" style="left:636px;top:542px;width:12px;background:#ececec"></div><div class="mz" style="left:648px;top:542px;width:12px;background:#e1e1e1"></div><div class="mz" style="left:660px;top:542px;width:12px;background:#e3e3e5"></div><div class="mz" style="left:672px;top:542px;width:12px;background:#e8e8e8"></div><div class="mz" style="left:684px;top:542px;width:12px;background:#f6f6f6"></div><div class="mz" style="left:600px;top:578px;width:12px;background:#eceded"></div><div class="mz" style="left:612px;top:578px;width:12px;background:#d3d3d3"></div><div class="mz" style="left:624px;top:578px;width:12px;background:#c8c9cc"></div><div class="mz" style="left:636px;top:578px;width:12px;background:#cacbcd"></div><div class="mz" style="left:648px;top:578px;width:12px;background:#cccccd"></div><div class="mz" style="left:660px;top:578px;width:12px;background:#c6c7ca"></div><div class="mz" style="left:672px;top:578px;width:12px;background:#c8c9cc"></div><div class="mz" style="left:684px;top:578px;width:12px;background:#e9eaec"></div><div class="mz" style="left:600px;top:614px;width:12px;background:#f1f3f3"></div><div class="mz" style="left:612px;top:614px;width:12px;background:#ebebeb"></div><div class="mz" style="left:624px;top:614px;width:12px;background:#e3e4e7"></div><div class="mz" style="left:636px;top:614px;width:12px;background:#e8e8e8"></div><div class="mz" style="left:648px;top:614px;width:12px;background:#dcdee1"></div><div class="mz" style="left:660px;top:614px;width:12px;background:#eae8e5"></div><div class="mz" style="left:672px;top:614px;width:12px;background:#e1e2e5"></div><div class="mz" style="left:684px;top:614px;width:12px;background:#f0f1f4"></div><div class="mz" style="left:600px;top:626px;width:12px;background:#fafcfc"></div><div class="mz" style="left:612px;top:626px;width:12px;background:#f5f3f2"></div><div class="mz" style="left:624px;top:626px;width:12px;background:#f6f8fb"></div><div class="mz" style="left:636px;top:626px;width:12px;background:#eff0f1"></div><div class="mz" style="left:648px;top:626px;width:12px;background:#eef0f3"></div><div class="mz" style="left:660px;top:626px;width:12px;background:#f1f1f2"></div><div class="mz" style="left:672px;top:626px;width:12px;background:#f0f0f1"></div><div class="mz" style="left:684px;top:626px;width:12px;background:#f8f8f8"></div>
<div class="t" style="left:1496px;top:708px;font-size:12px;line-height:16px;color:#606266">共 8 条</div><div class="t" style="left:1549px;top:703px;width:100px;height:24px;border:1px solid #dcdfe6;border-radius:4px;background:#fff"></div><div class="t" style="left:1568px;top:708px;font-size:12px;line-height:16px;color:#606266">10条/页</div><svg class="t" style="left:1629px;top:711px" width="12" height="8" viewBox="0 0 12 8"><path d="M1 1.2 L6 6.2 L11 1.2" fill="none" stroke="#a8abb2" stroke-width="1"/></svg><div class="t" style="left:1665px;top:703px;width:24px;height:24px;border-radius:2px;background:#f4f4f5"></div><svg class="t" style="left:1673px;top:710px" width="8" height="10" viewBox="0 0 8 10"><path d="M6 .8 L1.8 5 L6 9.2" fill="none" stroke="#b4b7bd" stroke-width="1"/></svg><div class="t" style="left:1697px;top:703px;width:24px;height:24px;border-radius:2px;background:#05b985;color:#fff;font-size:13px;font-weight:bold;line-height:24px;text-align:center">1</div><div class="t" style="left:1729px;top:703px;width:24px;height:24px;border-radius:2px;background:#f4f4f5"></div><svg class="t" style="left:1737px;top:710px" width="8" height="10" viewBox="0 0 8 10"><path d="M2 .8 L6.2 5 L2 9.2" fill="none" stroke="#8c8f96" stroke-width="1"/></svg><div class="t" style="left:1769px;top:708px;font-size:12px;line-height:16px;color:#606266">前往</div><div class="t" style="left:1801px;top:703px;width:56px;height:24px;border:1px solid #dcdfe6;border-radius:4px;background:#fff;text-align:center;font-size:12px;line-height:24px;color:#606266">1</div><div class="t" style="left:1865px;top:708px;font-size:12px;line-height:16px;color:#606266">页</div>
</body>
</html>
